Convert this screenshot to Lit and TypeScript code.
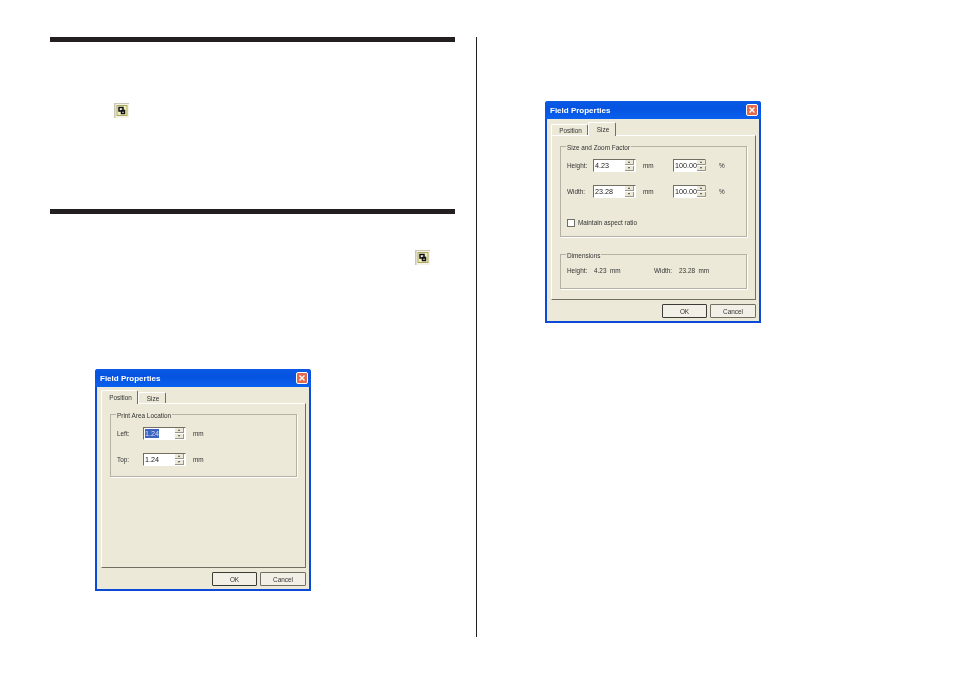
import { LitElement, html, css } from "lit";
import { customElement, property } from "lit/decorators.js";

const spinner = (value: string, wide: boolean, selected = false) => html`
  <div class="spin ${wide ? "wide" : "narrow"}">
    <span class="val ${selected ? "sel" : ""}">${value}</span>
    <div class="arrows">
      <span class="arrow"><i class="up"></i></span>
      <span class="arrow"><i class="down"></i></span>
    </div>
  </div>
`;

@customElement("field-dialog")
export class FieldDialog extends LitElement {
  @property({ type: String })
  tab = "position";

  static styles = css`
    :host {
      display: block;
      width: 216px;
      height: 222px;
    }
    .win {
      box-sizing: border-box;
      width: 216px;
      height: 222px;
      display: flex;
      flex-direction: column;
      background: #ece9d8;
      border: 2px solid #0a4ad6;
      border-top: none;
      border-radius: 3px 3px 0 0;
      font-family: "Liberation Sans", Arial, sans-serif;
      font-size: 6.4px;
      color: #333;
      filter: blur(0.35px);
    }
    .title {
      height: 18px;
      margin: 0 -2px;
      padding: 0 3px 0 5px;
      flex: none;
      display: flex;
      align-items: center;
      justify-content: space-between;
      background: linear-gradient(#0a5ae6, #0553e0 40%, #0a60ee);
      border-radius: 3px 3px 0 0;
      color: #fff;
      font-size: 8px;
      font-weight: bold;
    }
    .close {
      width: 12px;
      height: 12px;
      display: block;
      border: 1px solid #fff;
      box-sizing: border-box;
      border-radius: 2px;
      background: #e2694a;
    }
    .tabs {
      display: flex;
      align-items: flex-end;
      height: 16px;
      flex: none;
      padding-left: 4px;
    }
    .tabs span {
      display: flex;
      align-items: center;
      justify-content: center;
      box-sizing: border-box;
      height: 11px;
      padding-left: 2px;
      border: 1px solid #fff;
      border-bottom: none;
      border-right: 1px solid #716f64;
      border-radius: 2px 2px 0 0;
    }
    .tabs span.on {
      height: 14px;
      position: relative;
      top: 1px;
      background: #ece9d8;
      z-index: 1;
    }
    .tabs .pos {
      width: 37px;
    }
    .tabs .siz {
      width: 28px;
    }
    .panel {
      box-sizing: border-box;
      height: 165px;
      margin: 0 3px 0 4px;
      flex: none;
      padding: 10px 8px 0 8px;
      display: flex;
      flex-direction: column;
      gap: 17px;
      border: 1px solid #fff;
      border-right: 1px solid #716f64;
      border-bottom: 1px solid #716f64;
    }
    .group {
      box-sizing: border-box;
      border: 1px solid #b5b2a4;
      box-shadow: 1px 1px 0 #fff;
      padding: 0 6px;
    }
    .legend {
      width: fit-content;
      height: 8px;
      line-height: 8px;
      margin: -3px 0 0 -1px;
      padding: 0 1px;
      background: #ece9d8;
    }
    .row {
      display: flex;
      align-items: center;
      height: 13px;
    }
    .lbl {
      width: 26px;
      flex: none;
    }
    .unit {
      margin-left: 7px;
      width: 30px;
      flex: none;
    }
    .pct {
      margin-left: 13px;
    }
    .spin {
      box-sizing: border-box;
      height: 13px;
      flex: none;
      display: flex;
      justify-content: space-between;
      align-items: center;
      background: #fff;
      border: 1px solid;
      border-color: #716f64 #fff #fff #716f64;
      color: #222;
      font-size: 7.2px;
      padding: 0 1px;
    }
    .spin.narrow {
      width: 43px;
    }
    .spin.wide {
      width: 33px;
    }
    .val.sel {
      background: #3a64c0;
      color: #dde;
    }
    .arrows {
      display: flex;
      flex-direction: column;
      gap: 1px;
    }
    .arrow {
      width: 9px;
      height: 5px;
      display: flex;
      align-items: center;
      justify-content: center;
      background: #ece9d8;
      border-right: 1px solid #99968a;
      border-bottom: 1px solid #99968a;
      box-sizing: border-box;
    }
    .arrow i {
      border-left: 1.5px solid transparent;
      border-right: 1.5px solid transparent;
    }
    .up {
      border-bottom: 2px solid #444;
    }
    .down {
      border-top: 2px solid #444;
    }
    .check {
      display: flex;
      align-items: center;
      gap: 3px;
    }
    .box {
      box-sizing: border-box;
      width: 8px;
      height: 8px;
      background: #fff;
      border: 1px solid #716f64;
    }
    .dims {
      display: flex;
      align-items: center;
      height: 13px;
      margin-top: 4px;
    }
    .dims .a {
      width: 27px;
    }
    .dims .b {
      width: 60px;
    }
    .dims .c {
      width: 25px;
    }
    .foot {
      flex: none;
      display: flex;
      justify-content: flex-end;
      gap: 3px;
      padding: 4px 3px 0 0;
    }
    .foot span {
      box-sizing: border-box;
      height: 14px;
      display: flex;
      align-items: center;
      justify-content: center;
      border: 1px solid #716f64;
      border-radius: 1px;
      background: #f1efe6;
    }
    .foot .ok {
      width: 45px;
      border: 1px solid #3a3a36;
    }
    .foot .cancel {
      width: 46px;
    }
    .h63 {
      height: 63px;
    }
    .h91 {
      height: 91px;
    }
    .h35 {
      height: 35px;
    }
    .first {
      margin-top: 7px;
    }
    .next {
      margin-top: 13px;
    }
    .check.far {
      margin-top: 18px;
    }
  `;

  renderPosition() {
    return html`
      <div class="group h63">
        <div class="legend">Print Area Location</div>
        <div class="row first">
          <span class="lbl">Left:</span>${spinner("1.24", false, true)}
          <span class="unit">mm</span>
        </div>
        <div class="row next">
          <span class="lbl">Top:</span>${spinner("1.24", false)}
          <span class="unit">mm</span>
        </div>
      </div>
    `;
  }

  renderSize() {
    return html`
      <div class="group h91">
        <div class="legend">Size and Zoom Factor</div>
        <div class="row first">
          <span class="lbl">Height:</span>${spinner("4.23", false)}
          <span class="unit">mm</span>${spinner("100.00", true)}
          <span class="pct">%</span>
        </div>
        <div class="row next">
          <span class="lbl">Width:</span>${spinner("23.28", false)}
          <span class="unit">mm</span>${spinner("100.00", true)}
          <span class="pct">%</span>
        </div>
        <div class="row check far"><span class="box"></span>Maintain aspect ratio</div>
      </div>
      <div class="group h35">
        <div class="legend">Dimensions</div>
        <div class="dims">
          <span class="a">Height:</span><span class="b">4.23&nbsp; mm</span>
          <span class="c">Width:</span><span>23.28&nbsp; mm</span>
        </div>
      </div>
    `;
  }

  render() {
    const isPos = this.tab === "position";
    return html`
      <div class="win">
        <div class="title">
          <span>Field Properties</span>
          <svg class="close" viewBox="0 0 10 10">
            <path d="M2.5 2.5l5 5M7.5 2.500l-5 5" stroke="#fff" stroke-width="1.4" fill="none" />
          </svg>
        </div>
        <div class="tabs">
          <span class="pos ${isPos ? "on" : ""}">Position</span>
          <span class="siz ${isPos ? "" : "on"}">Size</span>
        </div>
        <div class="panel">${isPos ? this.renderPosition() : this.renderSize()}</div>
        <div class="foot">
          <span class="ok">OK</span>
          <span class="cancel">Cancel</span>
        </div>
      </div>
    `;
  }
}

@customElement("app-root")
export class AppRoot extends LitElement {
  static styles = css`
    :host {
      display: block;
      width: 954px;
      height: 673px;
      background: #fff;
      overflow: hidden;
    }
    .page {
      display: flex;
      align-items: flex-start;
      padding-top: 37px;
    }
    .left {
      box-sizing: border-box;
      width: 476px;
      padding-left: 50px;
      flex: none;
    }
    .rule {
      width: 405px;
      height: 5px;
      background: #231f20;
    }
    .right {
      width: 1px;
      height: 600px;
      flex: none;
      background: #231f20;
    }
    .col2 {
      padding: 64px 0 0 68px;
    }
    .tool {
      display: block;
      width: 15px;
      height: 15px;
    }
    .t1 {
      margin: 61px 0 0 64px;
    }
    .rule2 {
      margin-top: 91px;
    }
    .t2 {
      margin: 36px 0 0 365px;
    }
    .d1 {
      margin: 104px 0 0 45px;
    }
  `;

  renderTool(cls: string) {
    return html`
      <svg class="tool ${cls}" viewBox="0 0 15 15">
        <rect width="15" height="15" fill="#c9c7b8" />
        <rect x="1.5" y="1" width="13.500" height="14" fill="#f4f3e6" />
        <rect x="3" y="2.500" width="10" height="10" fill="#f0eeb8" stroke="#a8a860" />
        <path d="M5 4.500h4v3.500h-4zM7.500 7.500h3v3h-3z" fill="#fff" stroke="#111" stroke-width="1.500" />
      </svg>
    `;
  }

  render() {
    return html`
      <div class="page">
        <div class="left">
          <div class="rule"></div>
          ${this.renderTool("t1")}
          <div class="rule rule2"></div>
          ${this.renderTool("t2")}
          <field-dialog class="d1" tab="position"></field-dialog>
        </div>
        <div class="right"></div>
        <div class="col2">
          <field-dialog tab="size"></field-dialog>
        </div>
      </div>
    `;
  }
}
